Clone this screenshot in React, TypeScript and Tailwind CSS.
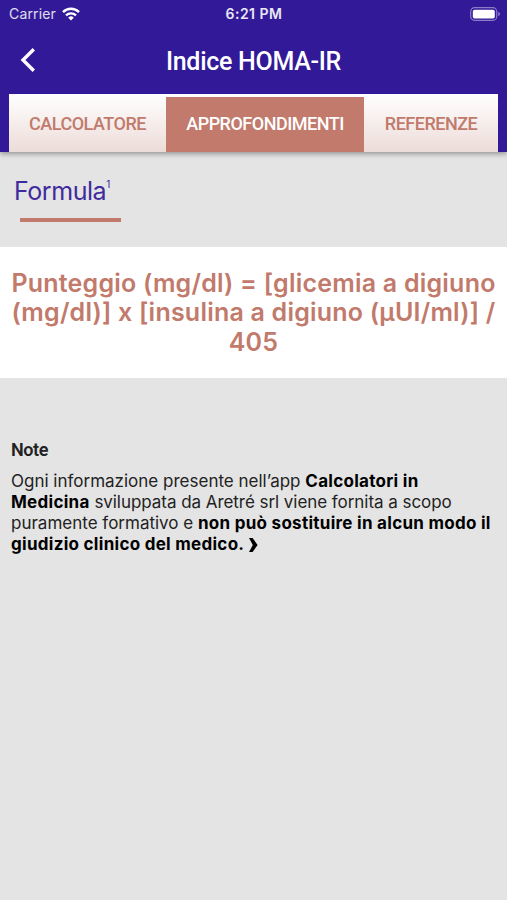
import type { ReactNode } from "react";

type TabProps = {
  label: string;
  className: string;
  active?: boolean;
};

function Tab({ label, className, active = false }: TabProps) {
  return (
    <button
      type="button"
      role="tab"
      aria-selected={active}
      className={`flex items-center justify-center pb-[2px] font-medium whitespace-nowrap ${className} ${
        active ? "bg-[#c17a6b] text-white" : "text-[#c17a6b]"
      }`}
    >
      {label}
    </button>
  );
}

function StatusBar() {
  return (
    <div className="grid h-7 grid-cols-3 items-center pr-[6px] pl-[9px] text-[14px] leading-none">
      <div className="flex items-center gap-[6px] text-white/85">
        <span className="tracking-[0.15px]">Carrier</span>
        <svg viewBox="0 0 18 14" className="h-[14px] w-[18px] text-white" fill="none" stroke="currentColor">
          <path d="M1 5.1a11.5 11.5 0 0 1 16 0" strokeWidth="2.5" />
          <path d="M4 8.4a7.2 7.2 0 0 1 10 0" strokeWidth="2.3" />
          <path d="M9 13.5 6.2 10.7a4 4 0 0 1 5.6 0Z" fill="currentColor" stroke="none" />
        </svg>
      </div>
      <span className="pr-[2px] text-center text-[14px] font-semibold tracking-[0.5px] text-white/90">6:21 PM</span>
      <svg viewBox="0 0 31 14" className="h-[14px] w-[31px] justify-self-end">
        <rect x="0.7" y="0.7" width="26" height="12.6" rx="3.8" fill="none" stroke="#8c7bc9" strokeWidth="1.2" />
        <rect x="2.8" y="2.7" width="22" height="8.8" rx="1.8" fill="#fff" />
        <path d="M28.2 4.8c2.4.8 2.4 3.6 0 4.4Z" fill="#8c7bc9" />
      </svg>
    </div>
  );
}

function Header() {
  return (
    <header className="h-[152px] bg-[#321997] text-white shadow-[0_2px_5px_rgba(0,0,0,0.35)]">
      <StatusBar />
      <div className="grid h-[66px] grid-cols-[60px_1fr_60px] items-center">
        <button type="button" aria-label="Indietro" className="-mt-[2px] pl-5">
          <svg viewBox="0 0 16 24" className="h-6 w-4" fill="none" stroke="currentColor" strokeWidth="3.4">
            <path d="M13.8 1.2 3 12l10.8 10.8" />
          </svg>
        </button>
        <h1 className="pt-px text-center font-[Roboto] text-[25px] font-medium tracking-[-0.28px]">Indice HOMA-IR</h1>
      </div>
      <div
        role="tablist"
        className="mx-[9px] flex h-[58px] bg-linear-to-b from-white to-[#ecdcd8] pt-[3px] font-[Roboto] text-[18px] tracking-[-0.5px]"
      >
        <Tab label="CALCOLATORE" className="w-[157px]" />
        <Tab label="APPROFONDIMENTI" className="w-[198px]" active />
        <Tab label="REFERENZE" className="w-[134px]" />
      </div>
    </header>
  );
}

function Line({ children }: { children: ReactNode }) {
  return <span className="block whitespace-nowrap">{children}</span>;
}

export default function App() {
  return (
    <div className="h-[900px] w-[507px] overflow-hidden bg-[#e4e4e4] font-[Inter,sans-serif]">
      <Header />
      <main>
        <section>
          <div className="h-[95px] pt-[22px] pl-[14px]">
            <h2 className="flex h-[34px] items-start text-[25px] leading-[35px] tracking-[-0.45px] text-[#3f2a9e]">
              Formula
              <sup className="top-0 pt-[5px] text-[10px] leading-none">1</sup>
            </h2>
            <div className="mt-[10px] ml-[6px] h-1 w-[101px] bg-[#c17a6b]" />
          </div>
          <p className="h-[131px] bg-white pt-[22px] text-center text-[25px] leading-[29.3px] font-semibold tracking-[0.22px] text-[#c17a6b]">
            <Line>Punteggio (mg/dl) = [glicemia a digiuno</Line>
            <Line>(mg/dl)] x [insulina a digiuno (μUI/ml)] /</Line>
            <Line>405</Line>
          </p>
        </section>
        <section className="px-[11px] pt-[60px] text-[#222]">
          <h3 className="font-[Roboto] text-[18px] leading-6 font-semibold tracking-[-0.4px]">Note</h3>
          <p className="mt-[9px] text-[17px] leading-[20.9px] [&_strong]:font-bold [&_strong]:tracking-[0.28px] [&_strong]:text-black">
            <Line>
              Ogni informazione presente nell’app <strong>Calcolatori in</strong>
            </Line>
            <Line>
              <strong>Medicina</strong> <span className="tracking-[-0.05px]">sviluppata da Aretré srl viene fornita a scopo</span>
            </Line>
            <Line>
              puramente formativo e <strong>non può sostituire in alcun modo il</strong>
            </Line>
            <Line>
              <strong>giudizio clinico del medico.</strong>
              <svg viewBox="0 0 9 14" className="ml-[5px] inline-block h-[14px] w-[9px] align-[-2px]" fill="#000">
                <path d="M0 0h3.6l5 7-5 7H0l3.8-7Z" />
              </svg>
            </Line>
          </p>
        </section>
      </main>
    </div>
  );
}
